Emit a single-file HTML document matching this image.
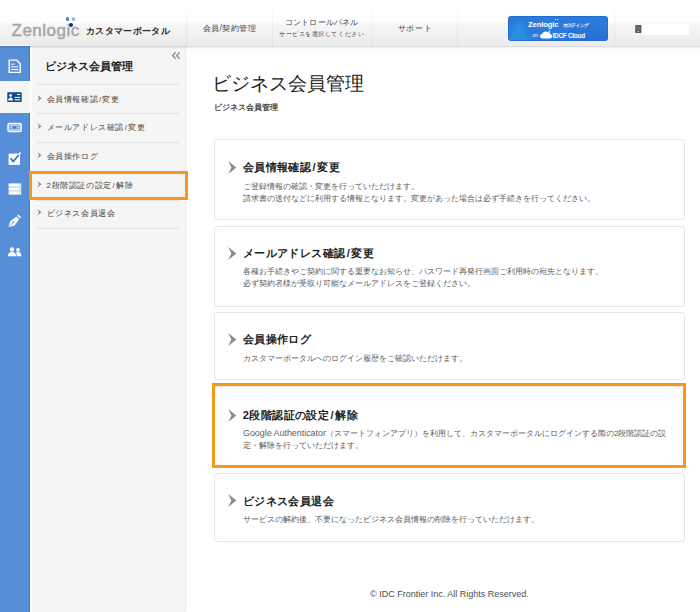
<!DOCTYPE html>
<html lang="ja"><head><meta charset="utf-8">
<style>
*{box-sizing:border-box;margin:0;padding:0}
html,body{width:700px;height:612px;overflow:hidden;background:#fff;font-family:"Liberation Sans",sans-serif;color:#333}
.abs{position:absolute}
#hdr{position:absolute;left:0;top:0;width:700px;height:46px;background:linear-gradient(#fff 0%,#fff 44%,#f5f5f5 56%,#ebebeb 100%);z-index:5}
#hdr:after{content:"";position:absolute;left:0;right:0;top:45.5px;height:3px;background:linear-gradient(rgba(0,0,0,.17),rgba(0,0,0,.06) 50%,rgba(0,0,0,0))}
.vd{position:absolute;top:6px;width:1px;height:40px;background:linear-gradient(rgba(0,0,0,0),rgba(0,0,0,.045) 30%,rgba(0,0,0,.045))}
.logo{position:absolute;left:11.5px;top:21.8px;font-size:17px;color:#a3a3a3;letter-spacing:0.5px;line-height:18px;-webkit-text-stroke:0.35px #a3a3a3}
.dot{position:absolute;width:3.4px;height:3.4px;border-radius:50%}
.portal{position:absolute;left:86px;top:25px;font-size:9px;font-weight:bold;color:#2a2a2a;letter-spacing:0.35px;white-space:nowrap}
.nav{position:absolute;font-size:8px;color:#444;white-space:nowrap}
#rail{position:absolute;left:0;top:46px;width:30px;height:566px;background:#568ed7;border-right:1px solid #3f7ad0}
#panel{position:absolute;left:30px;top:46px;width:156px;height:566px;background:#f5f5f5;border-left:2px solid #fdfdfd;border-right:1px solid #ebebeb;box-shadow:1px 0 2px rgba(0,0,0,.025)}
.side-title{position:absolute;left:45.2px;top:59px;font-size:11px;font-weight:bold;color:#222;white-space:nowrap}
.sdiv{position:absolute;left:37px;width:142px;height:1px;background:#e2e2e2}
.sitem{position:absolute;left:46.5px;font-size:8px;letter-spacing:0.62px;color:#454545;white-space:nowrap}
.schev{position:absolute;left:37px;width:5px;height:7px}
.card{position:absolute;left:213.6px;width:471px;border:1px solid #e6e6e6;border-radius:3px;background:#fff}
.ct{position:absolute;left:242.8px;font-size:11px;letter-spacing:0.4px;font-weight:bold;color:#222;white-space:nowrap}
.sl{padding:0 1.3px}
.sl2{padding:0 0.7px}
.cd{position:absolute;left:243px;font-size:8.1px;line-height:12px;color:#5c5c5c;white-space:nowrap}
.chev{position:absolute;left:228px;width:9px;height:13px}
.orange{position:absolute;border:3px solid #f6991a}
</style></head><body>
<div id="hdr">
  <div class="logo">Zenlogic</div>
  <div class="dot" style="left:65.5px;top:17.2px;background:#3b7fe0"></div>
  <div class="dot" style="left:72px;top:17.2px;background:#86b5ee"></div>
  <div class="dot" style="left:68.6px;top:22.5px;width:4px;height:4px;background:#0b2f7a"></div>
  <div class="portal">カスタマーポータル</div>
  <div class="vd" style="left:186px"></div>
  <div class="nav" style="left:202.5px;top:22.5px;font-size:8.3px;letter-spacing:0.45px">会員/契約管理</div>
  <div class="vd" style="left:272px"></div>
  <div class="nav" style="left:285px;top:17px;font-size:8.3px;letter-spacing:0.15px">コントロールパネル</div>
  <div class="nav" style="left:279px;top:30.2px;font-size:6.4px;letter-spacing:0.56px">サービスを選択してください</div>
  <div class="vd" style="left:371px"></div>
  <div class="nav" style="left:397.5px;top:22.5px;font-size:8px;letter-spacing:0.8px">サポート</div>
  <div class="vd" style="left:457px"></div>
  <div class="abs" style="left:508px;top:16px;width:100px;height:25px;border-radius:2.5px;overflow:hidden;background:#2b7bdb;border:1px solid #236ccf">
  <svg class="abs" style="left:0;top:0" width="100" height="25" viewBox="0 0 100 25">
    <path d="M0 25L10 4L20 25Z" fill="#2c9ae2" opacity=".7"/>
    <path d="M0 10L12 2L26 25L0 25Z" fill="#2a8ddf" opacity=".5"/>
    <path d="M50 25C60 10 72 4 85 8L100 14L100 25Z" fill="#2a70d6" opacity=".6"/>
    <path d="M70 25C80 18 90 16 100 20L100 25Z" fill="#2d68d2" opacity=".6"/>
  </svg>
  <div class="abs" style="left:19px;top:2.5px;font-size:7.6px;font-weight:bold;color:#fff;letter-spacing:-0.1px;line-height:9px">Zenlogic</div>
  <div class="abs" style="left:45.6px;top:2.2px;width:1.3px;height:1.3px;border-radius:50%;background:#fff"></div><div class="abs" style="left:48.2px;top:2.2px;width:1.3px;height:1.3px;border-radius:50%;background:#fff"></div>
  <div class="abs" style="left:53.5px;top:4.8px;font-size:5px;letter-spacing:-0.75px;color:#fff;font-weight:bold;line-height:6px;white-space:nowrap">ホスティング</div>
  <div class="abs" style="left:23.5px;top:14.5px;font-size:5px;color:#fff;line-height:6px">on</div>
  <svg class="abs" style="left:31px;top:12.5px" width="12" height="9" viewBox="0 0 12 9"><path d="M2.5 8.5C0.8 8.5 0 7.4 0 6.2C0 5 0.9 4 2.2 4C2.6 2.4 3.9 1.4 5.6 1.4C6.6 1.4 7.5 1.8 8.1 2.4C8.6 1 9.6 0.4 10.6 0.6C9.8 1.2 9.4 2.2 9.6 3.4C11 3.8 12 4.9 12 6.2C12 7.6 11 8.5 9.6 8.5Z" fill="#fff"/></svg>
  <div class="abs" style="left:43.5px;top:13.5px;font-size:6.4px;font-weight:bold;color:#fff;letter-spacing:-0.25px;line-height:9px;white-space:nowrap">IDCF Cloud</div>
</div>
  <div class="vd" style="left:614px"></div>
  <svg class="abs" style="left:634px;top:24px" width="9" height="10" viewBox="0 0 9 10"><rect x="0.5" y="0.5" width="8" height="9" fill="#fff" opacity=".7"/><rect x="1.2" y="1" width="6.2" height="8" rx="0.8" fill="#505050"/><rect x="2" y="1.8" width="4.6" height="4.6" fill="#6a6a6a"/><rect x="3.6" y="7" width="1.4" height="1.2" fill="#ddd"/></svg>
  <div class="abs" style="left:642px;top:23.5px;width:47px;height:11px;background:#fff"></div>
</div>

<div id="rail"></div>
<div class="abs" style="left:0;top:45px;width:31px;height:1.3px;background:#fbfaf4;z-index:6"></div>
<div class="abs" style="left:0;top:80.5px;width:30px;height:32px;background:#f5f5f5"></div>
<svg class="abs" style="left:0;top:46px" width="30" height="220" viewBox="0 46 30 220">
  <!-- document -->
  <path d="M9.2 60.1H16.6L20.2 63.7V72.4H9.2Z" fill="none" stroke="#fff" stroke-width="1.4" stroke-linejoin="round"/>
  <path d="M11 64.2H14.5M11 66.9H18.3M11 69.5H18.3" stroke="#fff" stroke-width="1"/>
  <!-- id card -->
  <rect x="7.3" y="92.2" width="14.4" height="9.8" rx="0.6" fill="#174a8a"/>
  <circle cx="10.6" cy="95.4" r="1.4" fill="#fff"/>
  <path d="M8.2 100.6C8.3 98.6 9.2 97.5 10.6 97.5C12 97.5 12.9 98.6 13 100.6Z" fill="#fff"/>
  <path d="M17 94.5H20.2M14.6 97.4H20.2M14.6 99.8H20.2" stroke="#fff" stroke-width="1"/>
  <!-- money -->
  <rect x="8.1" y="123.4" width="13" height="8.2" rx="1" fill="#fff" fill-opacity=".22" stroke="#fff" stroke-width="1.5"/>
  <path d="M9.6 125.3H19.6M9.6 129.7H19.6" stroke="#fff" stroke-width="0.7" opacity=".9"/>
  <circle cx="14.6" cy="127.5" r="1.3" fill="#2f6fd0"/>
  <path d="M10.4 127.5H11.8M17.4 127.5H18.8" stroke="#fff" stroke-width="0.8"/>
  <!-- checkbox -->
  <rect x="8.6" y="153.6" width="11.4" height="11.3" fill="#fff"/>
  <path d="M10.6 158.2L13.1 161.6L18.8 155" fill="none" stroke="#3d74cd" stroke-width="1.8"/>
  <circle cx="20" cy="153.3" r="1" fill="#fff"/>
  <!-- list -->
  <rect x="8.6" y="183.4" width="12.6" height="3.4" fill="#fff"/>
  <rect x="8.6" y="187.3" width="12.6" height="3.4" fill="#fff"/>
  <rect x="8.6" y="191.2" width="12.6" height="3.4" fill="#fff"/>
  <circle cx="19.8" cy="185.1" r="0.55" fill="#568ed7"/><circle cx="19.8" cy="189" r="0.55" fill="#568ed7"/><circle cx="19.8" cy="192.9" r="0.55" fill="#568ed7"/>
  <!-- pen -->
  <path d="M8.3 227.3L10.2 221.2L16.5 216.6L19.1 219.2L14.6 225.5Z" fill="#fff"/>
  <path d="M17.2 215.6L18.4 214.6L21.1 217.3L20.1 218.5Z" fill="#fff"/>
  <path d="M8.6 227L13 222.6" stroke="#568ed7" stroke-width="0.8"/>
  <circle cx="13.3" cy="222.2" r="0.9" fill="#568ed7"/>
  <!-- users -->
  <circle cx="12" cy="249.4" r="2.2" fill="#fff"/>
  <path d="M7.8 256.2C7.9 253.3 9.6 252 12 252C14.4 252 16.1 253.3 16.2 256.2Z" fill="#fff"/>
  <circle cx="18" cy="249.8" r="1.9" fill="#fff"/>
  <path d="M16.8 256.2C16.8 254.4 16.4 253.2 15.6 252.5C16.2 252.2 17 252 18 252C20 252 21.3 253.3 21.4 256.2Z" fill="#fff"/>
</svg>
<div id="panel"></div>

<svg class="abs" style="left:171px;top:51px" width="10" height="9" viewBox="0 0 10 9"><path d="M4.6 1.2L1.6 4.5L4.6 7.8M8.6 1.2L5.6 4.5L8.6 7.8" fill="none" stroke="#8c8c8c" stroke-width="1.3"/></svg>
<div class="side-title">ビジネス会員管理</div>
<div class="sdiv" style="top:84px"></div>
<div class="sdiv" style="top:113px"></div>
<div class="sdiv" style="top:142px"></div>
<div class="sdiv" style="top:171px"></div>
<div class="sdiv" style="top:200px"></div>
<div class="sdiv" style="top:228px"></div>
<svg class="schev" style="top:94.5px" viewBox="0 0 5 7"><path d="M0.4 0.2L4.6 3.3L0.4 6.4L2 3.3Z" fill="#8a8a8a"/></svg>
<div class="sitem" style="top:93.5px">会員情報確認<span class="sl2">/</span>変更</div>
<svg class="schev" style="top:123.3px" viewBox="0 0 5 7"><path d="M0.4 0.2L4.6 3.3L0.4 6.4L2 3.3Z" fill="#8a8a8a"/></svg>
<div class="sitem" style="top:122.3px">メールアドレス確認<span class="sl2">/</span>変更</div>
<svg class="schev" style="top:151.7px" viewBox="0 0 5 7"><path d="M0.4 0.2L4.6 3.3L0.4 6.4L2 3.3Z" fill="#8a8a8a"/></svg>
<div class="sitem" style="top:150.7px">会員操作ログ</div>
<svg class="schev" style="top:180.8px" viewBox="0 0 5 7"><path d="M0.4 0.2L4.6 3.3L0.4 6.4L2 3.3Z" fill="#8a8a8a"/></svg>
<div class="sitem" style="top:179.8px">2段階認証の設定<span class="sl2">/</span>解除</div>
<svg class="schev" style="top:209.3px" viewBox="0 0 5 7"><path d="M0.4 0.2L4.6 3.3L0.4 6.4L2 3.3Z" fill="#8a8a8a"/></svg>
<div class="sitem" style="top:208.3px">ビジネス会員退会</div>


<div class="card" style="top:139px;height:81px"></div>
<div class="card" style="top:226px;height:81px"></div>
<div class="card" style="top:312px;height:68px"></div>
<div class="card" style="top:386px;height:80px"></div>
<div class="card" style="top:472.8px;height:69px"></div>


<div class="abs" style="left:211.8px;top:71.3px;font-size:18.5px;color:#222;white-space:nowrap">ビジネス会員管理</div>
<div class="abs" style="left:214px;top:102px;font-size:8px;font-weight:bold;color:#444;white-space:nowrap">ビジネス会員管理</div>
<svg class="chev" style="top:160.5px" viewBox="0 0 9 13"><path d="M0.2 0L8.4 6.5L0.2 13L3.4 6.5Z" fill="#8c8c8c"/></svg>
<div class="ct" style="top:160.0px">会員情報確認<span class="sl">/</span>変更</div>
<div class="cd" style="top:180.6px">ご登録情報の確認・変更を行っていただけます。<br>請求書の送付などに利用する情報となります。変更があった場合は必ず手続きを行ってください。</div>
<svg class="chev" style="top:246.5px" viewBox="0 0 9 13"><path d="M0.2 0L8.4 6.5L0.2 13L3.4 6.5Z" fill="#8c8c8c"/></svg>
<div class="ct" style="top:246.0px">メールアドレス確認<span class="sl">/</span>変更</div>
<div class="cd" style="top:265.8px">各種お手続きやご契約に関する重要なお知らせ、パスワード再発行画面ご利用時の宛先となります。<br>必ず契約者様が受取り可能なメールアドレスをご登録ください。</div>
<svg class="chev" style="top:332.5px" viewBox="0 0 9 13"><path d="M0.2 0L8.4 6.5L0.2 13L3.4 6.5Z" fill="#8c8c8c"/></svg>
<div class="ct" style="top:332.0px">会員操作ログ</div>
<div class="cd" style="top:352.8px">カスタマーポータルへのログイン履歴をご確認いただけます。</div>
<svg class="chev" style="top:408.5px" viewBox="0 0 9 13"><path d="M0.2 0L8.4 6.5L0.2 13L3.4 6.5Z" fill="#8c8c8c"/></svg>
<div class="ct" style="top:408.0px">2段階認証の設定<span class="sl">/</span>解除</div>
<div class="cd" style="top:427.2px"><span style="font-size:8.9px;letter-spacing:0px">Google Authenticator</span>（スマートフォンアプリ）を利用して、カスタマーポータルにログインする際の2段階認証の設<br>定・解除を行っていただけます。</div>
<svg class="chev" style="top:494.0px" viewBox="0 0 9 13"><path d="M0.2 0L8.4 6.5L0.2 13L3.4 6.5Z" fill="#8c8c8c"/></svg>
<div class="ct" style="top:493.5px">ビジネス会員退会</div>
<div class="cd" style="top:514.4px">サービスの解約後、不要になったビジネス会員情報の削除を行っていただけます。</div>
<div class="orange" style="left:212px;top:383px;width:474px;height:85px"></div>
<div class="orange" style="left:28.5px;top:171px;width:159px;height:29px"></div>

<div class="abs" style="left:370px;top:589px;font-size:9px;color:#4d4d4d;white-space:nowrap">© IDC Frontier Inc. All Rights Reserved.</div>
</body></html>
